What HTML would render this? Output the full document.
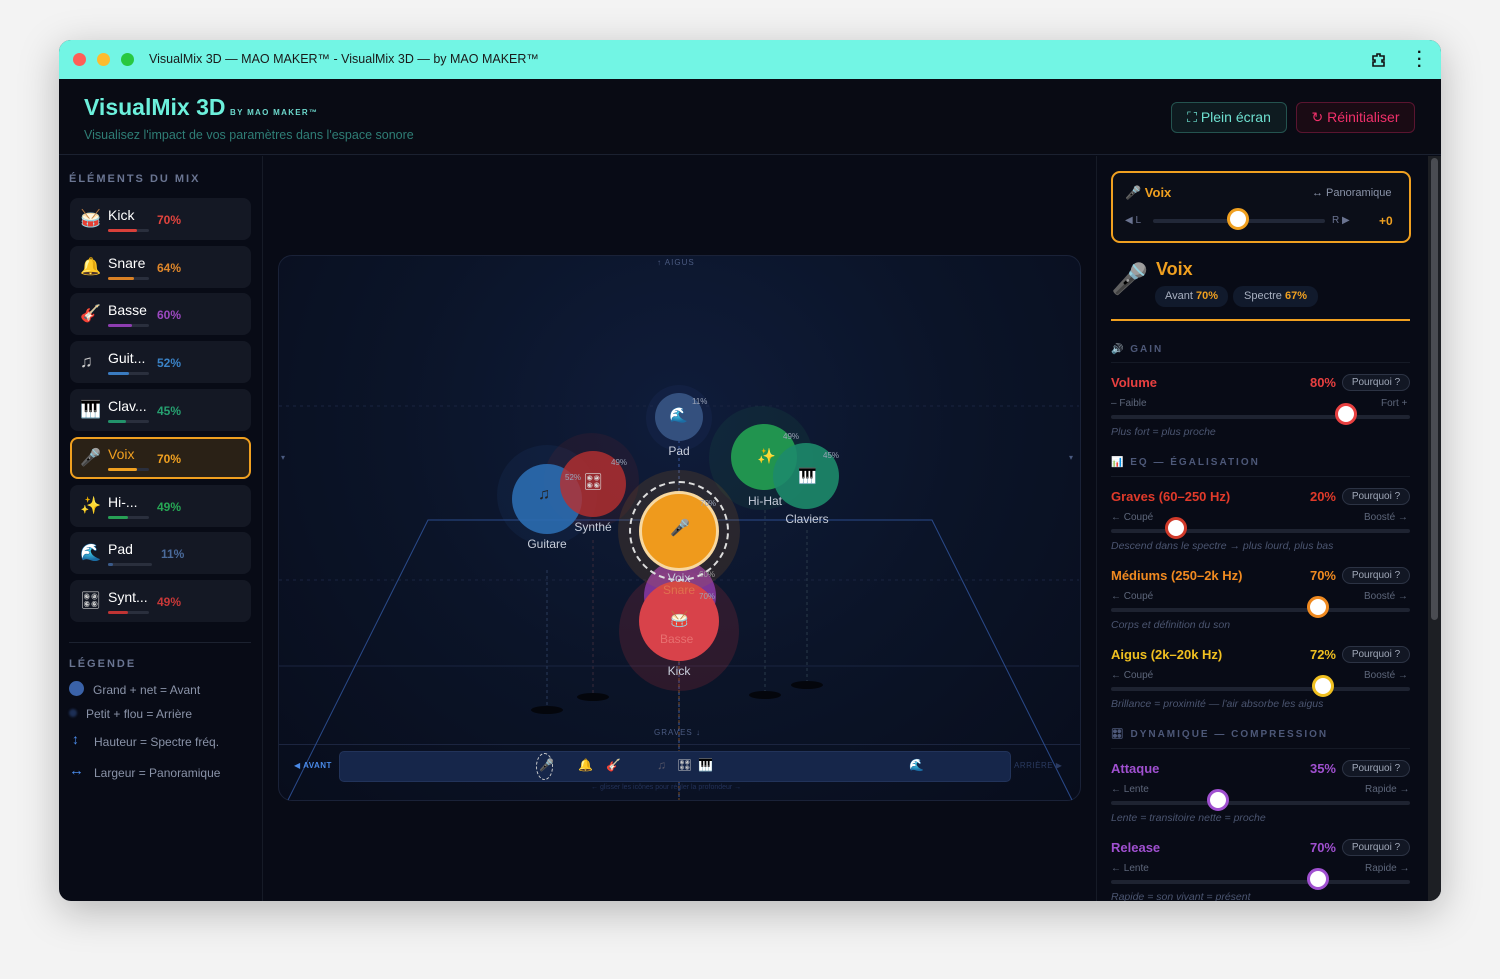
<!DOCTYPE html><html><head><meta charset="utf-8"><style>
*{box-sizing:border-box;margin:0;padding:0}
body{width:1500px;height:979px;background:#f3f3f3;font-family:"Liberation Sans","DejaVu Sans",sans-serif;position:relative;overflow:hidden}
.a{position:absolute}
.win{left:59px;top:40px;width:1382px;height:861px;border-radius:12px;overflow:hidden;background:#080b16;box-shadow:0 10px 40px rgba(0,0,0,.25)}
.tb{left:0;top:0;width:1382px;height:39px;background:#72f5e4}
.dot{width:13px;height:13px;border-radius:50%;top:13px}
.item{left:11px;width:181px;height:42px;background:#141824;border-radius:8px}
.item .ic{left:10px;top:11px;font-size:17px;color:#ccc}
.item .nm{left:38px;top:9px;font-size:14px;color:#fff}
.item .pc{left:87px;top:15px;font-size:12px;font-weight:bold}
.item .bt{left:38px;top:31px;width:41px;height:3px;background:#2a2f3d;border-radius:2px}
.item .bf{left:0;top:0;height:3px;border-radius:2px}
.lg{font-size:12px;color:#8a93a8}
.sec{font-size:10px;letter-spacing:2px;color:#4d5878;font-weight:bold}
.lab{font-size:13px;font-weight:bold}
.val{font-size:13px;font-weight:bold;text-align:right;width:60px}
.pq{width:68px;height:17px;border:1px solid #2c3344;border-radius:9px;background:#121724;color:#a0a8b8;font-size:10px;text-align:center;line-height:15px}
.sub{font-size:10px;color:#5d667a}
.trk{height:4px;background:#1e2331;border-radius:2px;width:299px}
.kn{width:22px;height:22px;border-radius:50%;background:#fff;border:3px solid}
.hint{font-size:10.5px;color:#4b5570;font-style:italic}
.c{border-radius:50%}
.cl{font-size:12px;color:#c8cedb;text-align:center;width:80px}
.pt{font-size:8px;color:#9aa3b6}
</style></head><body>
<div class="a win">
 <div class="a tb">
  <div class="a dot" style="left:14px;background:#fe5f57"></div>
  <div class="a dot" style="left:38px;background:#febc2e"></div>
  <div class="a dot" style="left:62px;background:#28c840"></div>
  <div class="a" style="left:90px;top:12px;font-size:12.5px;color:#1a1a1a">VisualMix 3D — MAO MAKER™ - VisualMix 3D — by MAO MAKER™</div>
  <svg class="a" style="left:1311px;top:11px" width="18" height="18" viewBox="0 0 18 18"><path d="M3 5h4V3h3v2h4v4h-2v2h2v4H3v-4h2V9H3z" fill="none" stroke="#111" stroke-width="1.6"/></svg>
  <div class="a" style="left:1358px;top:9px;font-size:16px;color:#111;font-weight:bold;line-height:7px">·<br>·<br>·</div>
 </div>
 <div class="a" style="left:0;top:39px;width:1382px;height:76px;background:#090b14;border-bottom:1px solid #1b2130"></div>
 <div class="a" style="left:25px;top:54px;font-size:23px;font-weight:bold;color:#6cf0dc">VisualMix 3D</div>
 <div class="a" style="left:171px;top:68px;font-size:8px;font-weight:bold;letter-spacing:1.3px;color:#6cd8cc">BY MAO MAKER™</div>
 <div class="a" style="left:25px;top:88px;font-size:12.5px;color:#2f7e76">Visualisez l'impact de vos paramètres dans l'espace sonore</div>
 <div class="a" style="left:1112px;top:62px;width:116px;height:31px;border:1px solid #24534f;border-radius:6px;background:#0e1b20;color:#6ee0d0;font-size:14px;text-align:center;line-height:29px">⛶ Plein écran</div>
 <div class="a" style="left:1237px;top:62px;width:119px;height:31px;border:1px solid #5a1530;border-radius:6px;background:#1a0b14;color:#f0306a;font-size:14px;text-align:center;line-height:29px">↻ Réinitialiser</div>
 <div class="a" style="left:203px;top:116px;width:1px;height:745px;background:#161b27"></div>
 <div class="a sec" style="left:10px;top:133px;font-size:11px;color:#6a7592">ÉLÉMENTS DU MIX</div>
 <div class="a item" style="top:158px"><span class="a ic">🥁</span><span class="a nm">Kick</span><span class="a pc" style="color:#e2443e">70%</span><div class="a bt"><div class="a bf" style="width:29px;background:#d8403a"></div></div></div>
 <div class="a item" style="top:206px"><span class="a ic">🔔</span><span class="a nm">Snare</span><span class="a pc" style="color:#e0872a">64%</span><div class="a bt"><div class="a bf" style="width:26px;background:#d98125"></div></div></div>
 <div class="a item" style="top:253px"><span class="a ic">🎸</span><span class="a nm">Basse</span><span class="a pc" style="color:#9c48c0">60%</span><div class="a bt"><div class="a bf" style="width:24px;background:#8d3db0"></div></div></div>
 <div class="a item" style="top:301px"><span class="a ic">♫</span><span class="a nm">Guit...</span><span class="a pc" style="color:#3a82c6">52%</span><div class="a bt"><div class="a bf" style="width:21px;background:#3a7bc0"></div></div></div>
 <div class="a item" style="top:349px"><span class="a ic">🎹</span><span class="a nm">Clav...</span><span class="a pc" style="color:#26a070">45%</span><div class="a bt"><div class="a bf" style="width:18px;background:#22926a"></div></div></div>
 <div class="a item" style="top:397px;background:#2a2116;border:2px solid #f0a020"><span class="a ic" style="left:8px;top:9px">🎤</span><span class="a nm" style="left:36px;top:7px;color:#f0a020">Voix</span><span class="a pc" style="left:85px;top:13px;color:#f0a020">70%</span><div class="a bt" style="left:36px;top:29px"><div class="a bf" style="width:29px;background:#f0a020"></div></div></div>
 <div class="a item" style="top:445px"><span class="a ic">✨</span><span class="a nm">Hi-...</span><span class="a pc" style="color:#27a855">49%</span><div class="a bt"><div class="a bf" style="width:20px;background:#27a055"></div></div></div>
 <div class="a item" style="top:492px"><span class="a ic">🌊</span><span class="a nm">Pad</span><span class="a pc" style="left:91px;color:#4a6a9a">11%</span><div class="a bt" style="width:44px"><div class="a bf" style="width:5px;background:#3a5a8a"></div></div></div>
 <div class="a item" style="top:540px"><span class="a ic">🎛</span><span class="a nm">Synt...</span><span class="a pc" style="color:#c83838">49%</span><div class="a bt"><div class="a bf" style="width:20px;background:#c03434"></div></div></div>
 <div class="a" style="left:10px;top:602px;width:182px;height:1px;background:#1c2230"></div>
 <div class="a sec" style="left:10px;top:618px;font-size:11px;color:#6a7592">LÉGENDE</div>
 <div class="a c" style="left:10px;top:641px;width:15px;height:15px;background:#3a62a8"></div>
 <div class="a lg" style="left:34px;top:643px">Grand + net = Avant</div>
 <div class="a c" style="left:10px;top:669px;width:8px;height:8px;background:#1d2f55;filter:blur(1px)"></div>
 <div class="a lg" style="left:27px;top:667px">Petit + flou = Arrière</div>
 <div class="a" style="left:13px;top:691px;color:#4a8ae8;font-size:14px">↕</div>
 <div class="a lg" style="left:35px;top:695px">Hauteur = Spectre fréq.</div>
 <div class="a" style="left:10px;top:722px;color:#4a8ae8;font-size:15px">↔</div>
 <div class="a lg" style="left:35px;top:726px">Largeur = Panoramique</div>
 <div class="a" style="left:219px;top:215px;width:803px;height:546px;border:1px solid #1a2238;border-radius:14px;background:radial-gradient(ellipse at 50% 30%,#0f1c3a 0%,#0b1428 50%,#080d1c 100%)"></div>
 <div class="a" style="left:220px;top:704px;width:801px;height:1px;background:#1c2540"></div>
 <svg class="a" style="left:0;top:0" width="1382" height="861">
  <line x1="220" y1="366" x2="1020" y2="366" stroke="#1a2440" stroke-dasharray="3 4"/>
  <line x1="220" y1="540" x2="1020" y2="540" stroke="#1a2440" stroke-dasharray="3 4"/>
  <line x1="220" y1="626" x2="1020" y2="626" stroke="#1a2440"/>
  <polyline points="229,760 369,480 873,480 1013,760" fill="none" stroke="#2a4a8a" stroke-width="1"/>
  <line x1="620" y1="400" x2="620" y2="760" stroke="#3a5aa0" stroke-dasharray="3 3"/>
  <line x1="620" y1="560" x2="620" y2="760" stroke="#c07020" stroke-dasharray="3 3" opacity=".6"/>
  <line x1="488" y1="530" x2="488" y2="670" stroke="#2a3a5a" stroke-dasharray="3 3"/>
  <line x1="534" y1="500" x2="534" y2="655" stroke="#3a2a3a" stroke-dasharray="3 3"/>
  <line x1="706" y1="470" x2="706" y2="655" stroke="#2a3a4a" stroke-dasharray="3 3"/>
  <line x1="748" y1="490" x2="748" y2="645" stroke="#2a3a4a" stroke-dasharray="3 3"/>
  <ellipse cx="488" cy="670" rx="16" ry="4" fill="#04060c"/><ellipse cx="534" cy="657" rx="16" ry="4" fill="#04060c"/>
  <ellipse cx="706" cy="655" rx="16" ry="4" fill="#04060c"/><ellipse cx="748" cy="645" rx="16" ry="4" fill="#04060c"/>
 </svg>
 <div class="a" style="left:598px;top:218px;font-size:8px;letter-spacing:1px;color:#4a5a80">↑ AIGUS</div>
 <div class="a" style="left:595px;top:688px;font-size:8px;letter-spacing:1px;color:#4a5a80">GRAVES ↓</div>
 <div class="a" style="left:222px;top:413px;font-size:8px;color:#4a5a80">▾</div>
 <div class="a" style="left:1010px;top:413px;font-size:8px;color:#4a5a80">▾</div>
 <div class="a c" style="left:438px;top:405px;width:100px;height:100px;background:rgba(40,80,150,.12)"></div>
 <div class="a c" style="left:485px;top:393px;width:95px;height:95px;background:rgba(150,40,40,.12)"></div>
 <div class="a c" style="left:453px;top:424px;width:70px;height:70px;background:#2b6cb0;opacity:.9"></div>
 <div class="a c" style="left:501px;top:411px;width:66px;height:66px;background:#b83030;opacity:.8"></div>
 <div class="a" style="left:479px;top:446px;font-size:16px;color:#222">♫</div>
 <div class="a" style="left:524px;top:432px;font-size:16px;color:#ddd">🎛</div>
 <div class="a pt" style="left:552px;top:418px">49%</div><div class="a pt" style="left:506px;top:433px">52%</div>
 <div class="a cl" style="left:494px;top:480px">Synthé</div>
 <div class="a cl" style="left:448px;top:497px">Guitare</div>
 <div class="a c" style="left:587px;top:345px;width:66px;height:66px;background:rgba(40,70,130,.15)"></div>
 <div class="a c" style="left:596px;top:353px;width:48px;height:48px;background:#34507e"></div>
 <div class="a" style="left:610px;top:366px;font-size:15px;color:#ccd">🌊</div>
 <div class="a pt" style="left:633px;top:357px">11%</div>
 <div class="a cl" style="left:580px;top:404px">Pad</div>
 <div class="a c" style="left:650px;top:366px;width:104px;height:104px;background:rgba(30,130,80,.12)"></div>
 <div class="a c" style="left:672px;top:384px;width:66px;height:66px;background:#21944f"></div>
 <div class="a c" style="left:714px;top:403px;width:66px;height:66px;background:#1d8a6a;opacity:.9"></div>
 <div class="a" style="left:698px;top:407px;font-size:15px;color:#fd4">✨</div>
 <div class="a" style="left:739px;top:427px;font-size:15px;color:#eee">🎹</div>
 <div class="a pt" style="left:724px;top:392px">49%</div><div class="a pt" style="left:764px;top:411px">45%</div>
 <div class="a cl" style="left:666px;top:454px">Hi-Hat</div>
 <div class="a cl" style="left:708px;top:472px">Claviers</div>
 <div class="a c" style="left:560px;top:531px;width:120px;height:120px;background:rgba(200,50,60,.18)"></div>
 <div class="a c" style="left:585px;top:520px;width:72px;height:72px;background:#8a3aa8;opacity:.85"></div>
 <div class="a c" style="left:580px;top:541px;width:80px;height:80px;background:#d8424a"></div>
 <div class="a" style="left:611px;top:570px;font-size:15px;color:#fff">🥁</div>
 <div class="a" style="left:601px;top:592px;font-size:12px;color:#e87070">Basse</div>
 <div class="a pt" style="left:640px;top:552px">70%</div><div class="a pt" style="left:640px;top:530px">60%</div>
 <div class="a cl" style="left:580px;top:624px">Kick</div>
 <div class="a c" style="left:559px;top:430px;width:122px;height:122px;background:rgba(200,120,30,.15)"></div>
 <div class="a c" style="left:570px;top:441px;width:100px;height:100px;border:2px dashed #ddd"></div>
 <div class="a c" style="left:580px;top:451px;width:80px;height:80px;background:#ef9a1c;border:3px solid #f7d8a0"></div>
 <div class="a" style="left:611px;top:478px;font-size:16px;color:#333">🎤</div>
 <div class="a pt" style="left:641px;top:459px">70%</div>
 <div class="a cl" style="left:580px;top:531px">Voix</div>
 <div class="a" style="left:604px;top:543px;font-size:12px;color:#e07050">Snare</div>
 <div class="a" style="left:280px;top:711px;width:672px;height:31px;background:#16264a;border:1px solid #22335a;border-radius:5px"></div>
 <div class="a" style="left:235px;top:721px;font-size:8px;letter-spacing:.5px;color:#4a8ae8;font-weight:bold">◀ AVANT</div>
 <div class="a" style="left:955px;top:721px;font-size:8px;letter-spacing:.5px;color:#2a3a60">ARRIÈRE ▶</div>
 <div class="a c" style="left:477px;top:713px;width:17px;height:27px;border:1px dashed #ccc"></div>
 <div class="a" style="left:480px;top:718px;font-size:12px">🎤</div>
 <div class="a" style="left:519px;top:718px;font-size:12px;color:#e0a020">🔔</div>
 <div class="a" style="left:547px;top:718px;font-size:12px;color:#d04040">🎸</div>
 <div class="a" style="left:598px;top:718px;font-size:12px;color:#556">♫</div>
 <div class="a" style="left:618px;top:718px;font-size:12px;color:#ccc">🎛</div>
 <div class="a" style="left:639px;top:718px;font-size:12px;color:#eee">🎹</div>
 <div class="a" style="left:850px;top:718px;font-size:12px;color:#889">🌊</div>
 <div class="a" style="left:532px;top:744px;font-size:7px;color:#23325a">← glisser les icônes pour régler la profondeur →</div>
 <div class="a" style="left:1037px;top:116px;width:1px;height:745px;background:#161b27"></div>
 <div class="a" style="left:1369px;top:116px;width:13px;height:745px;background:#1d1f24"></div>
 <div class="a" style="left:1372px;top:118px;width:7px;height:462px;background:#4a4c52;border-radius:4px"></div>
 <div class="a" style="left:1052px;top:131px;width:300px;height:72px;border:2px solid #f0a020;border-radius:9px;background:#0b0e18"></div>
 <div class="a" style="left:1066px;top:145px;font-size:13px;font-weight:bold;color:#f0a020">🎤 Voix</div>
 <div class="a" style="left:1253px;top:147px;font-size:11px;color:#8a93a8">↔ Panoramique</div>
 <div class="a" style="left:1066px;top:175px;font-size:10px;color:#6a7390">◀ L</div>
 <div class="a trk" style="left:1094px;top:179px;width:172px;background:#222838"></div>
 <div class="a kn" style="left:1168px;top:168px;border-color:#f0a020"></div>
 <div class="a" style="left:1273px;top:175px;font-size:10px;color:#6a7390">R ▶</div>
 <div class="a" style="left:1320px;top:174px;font-size:12px;font-weight:bold;color:#f0a020">+0</div>
 <div class="a" style="left:1052px;top:222px;font-size:30px;color:#aaa">🎤</div>
 <div class="a" style="left:1097px;top:219px;font-size:18px;font-weight:bold;color:#f0a020">Voix</div>
 <div class="a" style="left:1096px;top:246px;width:73px;height:21px;background:#111a2c;border-radius:10px;font-size:11px;color:#a8b0c0;line-height:21px;text-align:center">Avant <b style="color:#f0a020">70%</b></div>
 <div class="a" style="left:1174px;top:246px;width:85px;height:21px;background:#111a2c;border-radius:10px;font-size:11px;color:#a8b0c0;line-height:21px;text-align:center">Spectre <b style="color:#f0a020">67%</b></div>
 <div class="a" style="left:1052px;top:279px;width:299px;height:2px;background:#f0a020"></div>
 <div class="a sec" style="left:1052px;top:304px">🔊 GAIN</div>
 <div class="a" style="left:1052px;top:322px;width:299px;height:1px;background:#151a26"></div>
 <div class="a lab" style="left:1052px;top:335px;color:#e84040">Volume</div><div class="a val" style="left:1217px;top:335px;color:#e84040">80%</div><div class="a pq" style="left:1283px;top:334px">Pourquoi ?</div>
 <div class="a sub" style="left:1052px;top:358px">– Faible</div><div class="a sub" style="left:1322px;top:358px">Fort +</div>
 <div class="a trk" style="left:1052px;top:375px"></div><div class="a kn" style="left:1276px;top:363px;border-color:#e84040"></div>
 <div class="a hint" style="left:1052px;top:386px">Plus fort = plus proche</div>
 <div class="a sec" style="left:1052px;top:417px">📊 EQ — ÉGALISATION</div>
 <div class="a" style="left:1052px;top:436px;width:299px;height:1px;background:#151a26"></div>
 <div class="a lab" style="left:1052px;top:449px;color:#e03a2a">Graves (60–250 Hz)</div><div class="a val" style="left:1217px;top:449px;color:#e03a2a">20%</div><div class="a pq" style="left:1283px;top:448px">Pourquoi ?</div>
 <div class="a sub" style="left:1052px;top:472px">← Coupé</div><div class="a sub" style="left:1305px;top:472px">Boosté →</div>
 <div class="a trk" style="left:1052px;top:489px"></div><div class="a kn" style="left:1106px;top:477px;border-color:#d03a2a"></div>
 <div class="a hint" style="left:1052px;top:500px">Descend dans le spectre → plus lourd, plus bas</div>
 <div class="a lab" style="left:1052px;top:528px;color:#f08a20">Médiums (250–2k Hz)</div><div class="a val" style="left:1217px;top:528px;color:#f08a20">70%</div><div class="a pq" style="left:1283px;top:527px">Pourquoi ?</div>
 <div class="a sub" style="left:1052px;top:551px">← Coupé</div><div class="a sub" style="left:1305px;top:551px">Boosté →</div>
 <div class="a trk" style="left:1052px;top:568px"></div><div class="a kn" style="left:1248px;top:556px;border-color:#f08a20"></div>
 <div class="a hint" style="left:1052px;top:579px">Corps et définition du son</div>
 <div class="a lab" style="left:1052px;top:607px;color:#f0c020">Aigus (2k–20k Hz)</div><div class="a val" style="left:1217px;top:607px;color:#f0c020">72%</div><div class="a pq" style="left:1283px;top:606px">Pourquoi ?</div>
 <div class="a sub" style="left:1052px;top:630px">← Coupé</div><div class="a sub" style="left:1305px;top:630px">Boosté →</div>
 <div class="a trk" style="left:1052px;top:647px"></div><div class="a kn" style="left:1253px;top:635px;border-color:#f0c020"></div>
 <div class="a hint" style="left:1052px;top:658px">Brillance = proximité — l'air absorbe les aigus</div>
 <div class="a sec" style="left:1052px;top:689px">🎛 DYNAMIQUE — COMPRESSION</div>
 <div class="a" style="left:1052px;top:708px;width:299px;height:1px;background:#151a26"></div>
 <div class="a lab" style="left:1052px;top:721px;color:#a050d0">Attaque</div><div class="a val" style="left:1217px;top:721px;color:#a050d0">35%</div><div class="a pq" style="left:1283px;top:720px">Pourquoi ?</div>
 <div class="a sub" style="left:1052px;top:744px">← Lente</div><div class="a sub" style="left:1306px;top:744px">Rapide →</div>
 <div class="a trk" style="left:1052px;top:761px"></div><div class="a kn" style="left:1148px;top:749px;border-color:#a050d0"></div>
 <div class="a hint" style="left:1052px;top:772px">Lente = transitoire nette = proche</div>
 <div class="a lab" style="left:1052px;top:800px;color:#a050d0">Release</div><div class="a val" style="left:1217px;top:800px;color:#a050d0">70%</div><div class="a pq" style="left:1283px;top:799px">Pourquoi ?</div>
 <div class="a sub" style="left:1052px;top:823px">← Lente</div><div class="a sub" style="left:1306px;top:823px">Rapide →</div>
 <div class="a trk" style="left:1052px;top:840px"></div><div class="a kn" style="left:1248px;top:828px;border-color:#a050d0"></div>
 <div class="a hint" style="left:1052px;top:851px">Rapide = son vivant = présent</div>
</div>
</body></html>
